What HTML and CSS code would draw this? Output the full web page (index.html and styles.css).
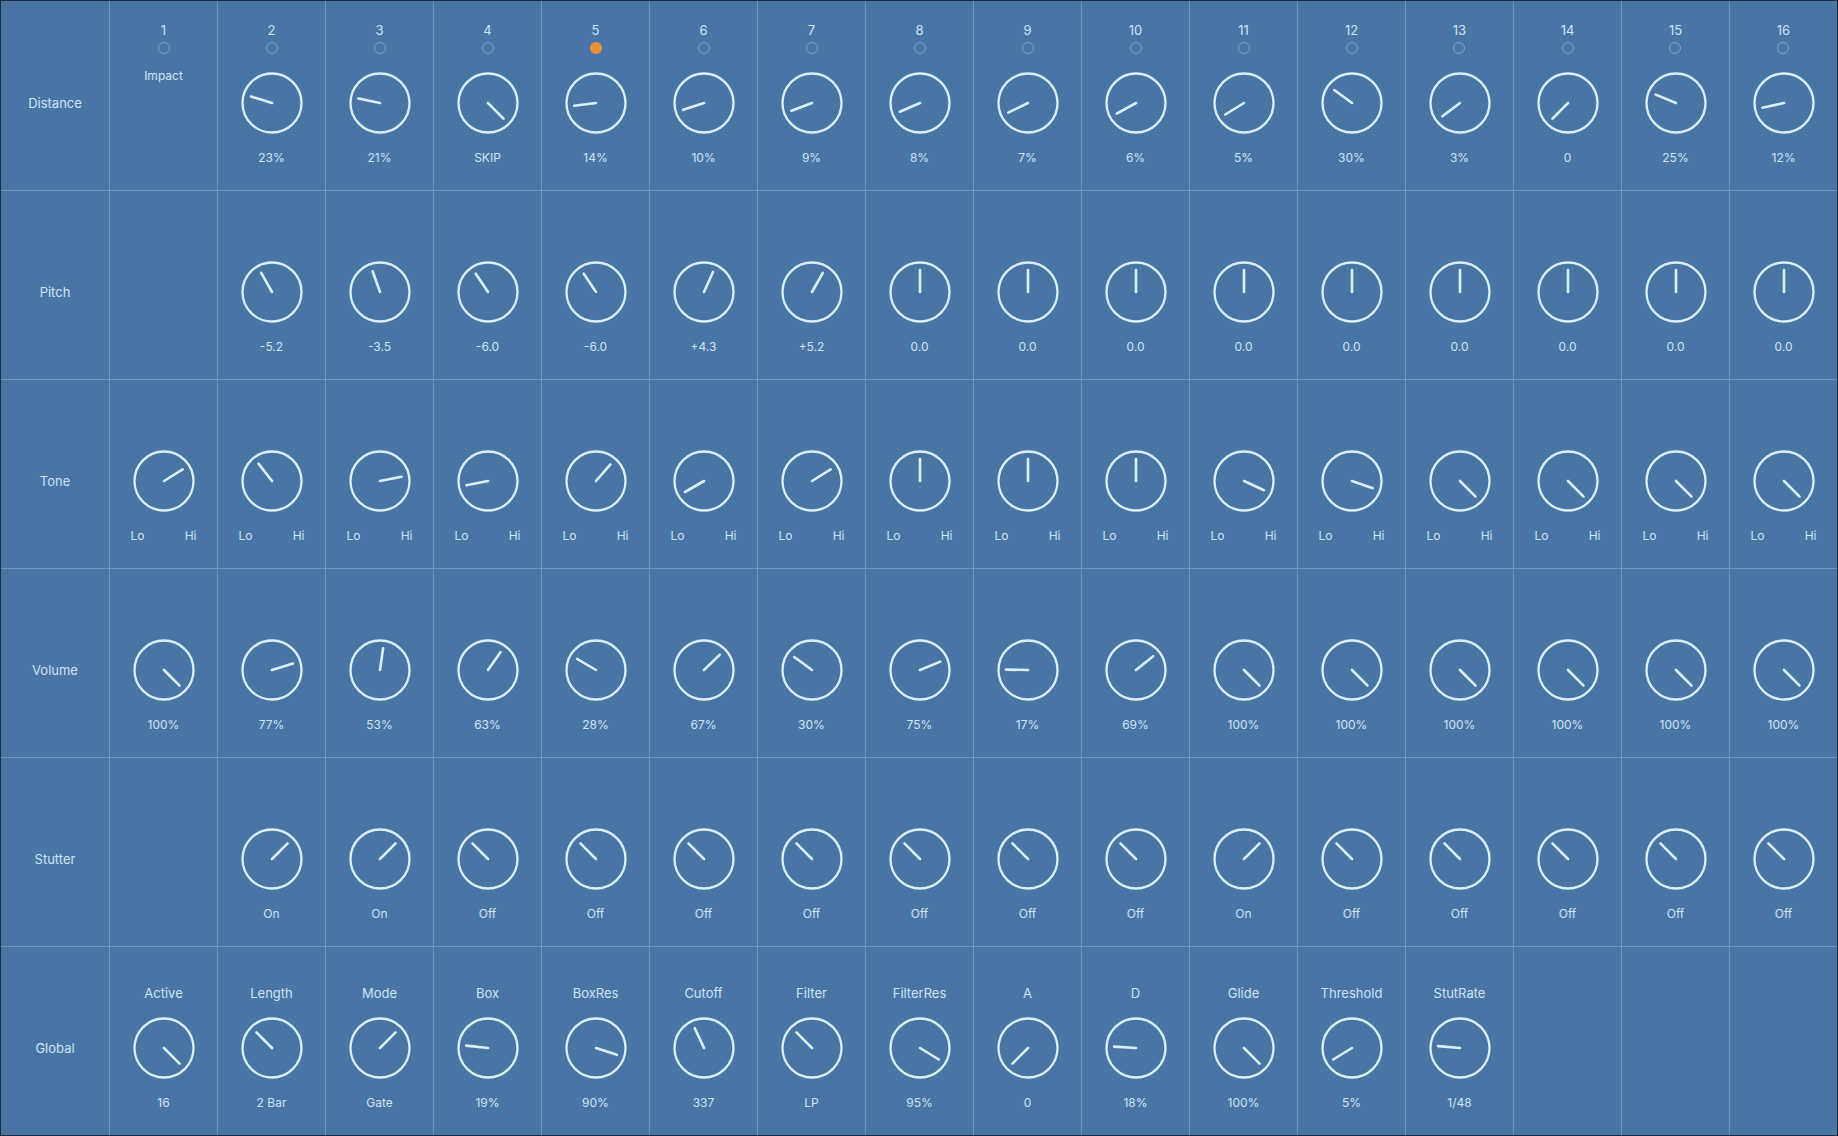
FILE: index.html
```html
<!DOCTYPE html>
<html lang="en">
<head>
    <meta charset="UTF-8">
    <meta name="viewport" content="width=device-width, initial-scale=1.0">
    <title>Step Sequencer</title>
    <link rel="stylesheet" href="styles.css">
</head>
<body>
    <div class="panel" id="panel"></div>

    <script>
        // knob angle: 0 is straight up, sweep runs -135..135
        const pct = p => -135 + p * 2.7;
        const pitch = v => v / 24 * 135;
        const ON = 45, OFF = -45;

        const distance = [
            { text: 'Impact' },
            { a: pct(23), v: '23%' }, { a: pct(21), v: '21%' }, { a: 135, v: 'SKIP' },
            { a: pct(14), v: '14%' }, { a: pct(10), v: '10%' }, { a: pct(9), v: '9%' },
            { a: pct(8), v: '8%' }, { a: pct(7), v: '7%' }, { a: pct(6), v: '6%' },
            { a: pct(5), v: '5%' }, { a: pct(30), v: '30%' }, { a: pct(3), v: '3%' },
            { a: -135, v: '0' }, { a: pct(25), v: '25%' }, { a: pct(12), v: '12%' }
        ];

        const pitchVals = ['-5.2', '-3.5', '-6.0', '-6.0', '+4.3', '+5.2',
            '0.0', '0.0', '0.0', '0.0', '0.0', '0.0', '0.0', '0.0', '0.0'];
        const pitchRow = [null].concat(pitchVals.map(v => ({ a: pitch(parseFloat(v)), v: v })));

        const toneAngles = [58, -38, 79, -101, 41, -120, 58, 0, 0, 0, 115, 109, 135, 135, 135, 135];
        const toneRow = toneAngles.map(a => ({ a: a, lohi: true }));

        const volumes = [100, 77, 53, 63, 28, 67, 30, 75, 17, 69, 100, 100, 100, 100, 100, 100];
        const volumeRow = volumes.map(p => ({ a: pct(p), v: p + '%' }));

        const stutters = [1, 1, 0, 0, 0, 0, 0, 0, 0, 1, 0, 0, 0, 0, 0];
        const stutterRow = [null].concat(stutters.map(s => ({ a: s ? ON : OFF, v: s ? 'On' : 'Off' })));

        const globalRow = [
            { label: 'Active', a: 135, v: '16' },
            { label: 'Length', a: OFF, v: '2 Bar' },
            { label: 'Mode', a: ON, v: 'Gate' },
            { label: 'Box', a: pct(19), v: '19%' },
            { label: 'BoxRes', a: pct(90), v: '90%' },
            { label: 'Cutoff', a: -25, v: '337' },
            { label: 'Filter', a: OFF, v: 'LP' },
            { label: 'FilterRes', a: pct(95), v: '95%' },
            { label: 'A', a: -135, v: '0' },
            { label: 'D', a: pct(18), v: '18%' },
            { label: 'Glide', a: 135, v: '100%' },
            { label: 'Threshold', a: pct(5), v: '5%' },
            { label: 'StutRate', a: -85, v: '1/48' },
            null, null, null
        ];

        const rows = [
            { name: 'Distance', cells: distance, steps: true },
            { name: 'Pitch', cells: pitchRow },
            { name: 'Tone', cells: toneRow },
            { name: 'Volume', cells: volumeRow },
            { name: 'Stutter', cells: stutterRow },
            { name: 'Global', cells: globalRow }
        ];

        const activeStep = 5;

        function knob(angle) {
            return '<svg class="knob" width="70" height="70" viewBox="0 0 70 70">' +
                '<circle cx="35" cy="35" r="29.5"/>' +
                '<line x1="35" y1="35" x2="35" y2="13" transform="rotate(' + angle.toFixed(1) + ' 35 35)"/>' +
                '</svg>';
        }

        function cellHtml(cell, row, col) {
            let head = '';
            if (row.steps) {
                head = '<span class="step-num">' + (col + 1) + '</span>' +
                    '<span class="step-dot' + (col + 1 === activeStep ? ' active' : '') + '"></span>';
            } else if (cell && cell.label) {
                head = '<span class="param-name">' + cell.label + '</span>';
            }

            let body = '';
            if (cell && cell.text) {
                body = '<div class="slot"><span class="slot-text">' + cell.text + '</span></div>';
            } else if (cell) {
                body = knob(cell.a);
                if (cell.lohi) {
                    body += '<div class="value lohi"><span>Lo</span><span>Hi</span></div>';
                } else {
                    body += '<div class="value">' + cell.v + '</div>';
                }
            }

            return '<div class="cell"><div class="head">' + head + '</div>' + body + '</div>';
        }

        const panel = document.getElementById('panel');
        let html = '';
        rows.forEach(row => {
            html += '<div class="row-label">' + row.name + '</div>';
            row.cells.forEach((cell, col) => {
                html += cellHtml(cell, row, col);
            });
        });
        panel.innerHTML = html;
    </script>
</body>
</html>
```

FILE: styles.css
```css
body {
    margin: 0;
    background-color: #1a2a3c;
    font-family: Inter, "Noto Sans", sans-serif;
    color: #cfe4f5;
}

.panel {
    width: 1838px;
    height: 1136px;
    box-sizing: border-box;
    border: 1px solid #1a2a3c;
    background-color: #4975a5;
    display: grid;
    grid-template-columns: repeat(17, 108px);
    grid-template-rows: repeat(6, 189px);
}

.row-label,
.cell {
    box-sizing: border-box;
    border-top: 1px solid #6d95c1;
}

/* first row sits on the panel border, not on a grid line */
.row-label:nth-child(-n+17),
.cell:nth-child(-n+17) {
    border-top: none;
    padding-top: 1px;
}

.row-label {
    padding-top: 93px;
    text-align: center;
    font-size: 13px;
    line-height: 16px;
}

.row-label:first-child {
    padding-top: 94px;
}

.cell {
    border-left: 1px solid #6d95c1;
    display: flex;
    flex-direction: column;
    align-items: center;
}

.head {
    height: 66px;
    display: flex;
    flex-direction: column;
    align-items: center;
}

.step-num {
    margin-top: 20px;
    font-size: 13px;
    line-height: 16px;
}

.step-dot {
    margin-top: 4px;
    width: 12px;
    height: 12px;
    box-sizing: border-box;
    border: 1.5px solid #7ea3c9;
    border-radius: 50%;
}

.step-dot.active {
    border: none;
    background-color: #e8913a;
}

.param-name {
    margin-top: 38px;
    font-size: 13px;
    line-height: 16px;
}

.knob {
    display: block;
}

.knob circle {
    fill: none;
    stroke: #d9f0fc;
    stroke-width: 2.3;
}

.knob line {
    stroke: #d9f0fc;
    stroke-width: 2.6;
    stroke-linecap: round;
}

.slot {
    height: 70px;
}

.slot-text {
    display: block;
    font-size: 12px;
    line-height: 16px;
}

.value {
    margin-top: 12px;
    font-size: 12px;
    line-height: 16px;
}

.lohi {
    width: 66px;
    display: flex;
    justify-content: space-between;
}
```
